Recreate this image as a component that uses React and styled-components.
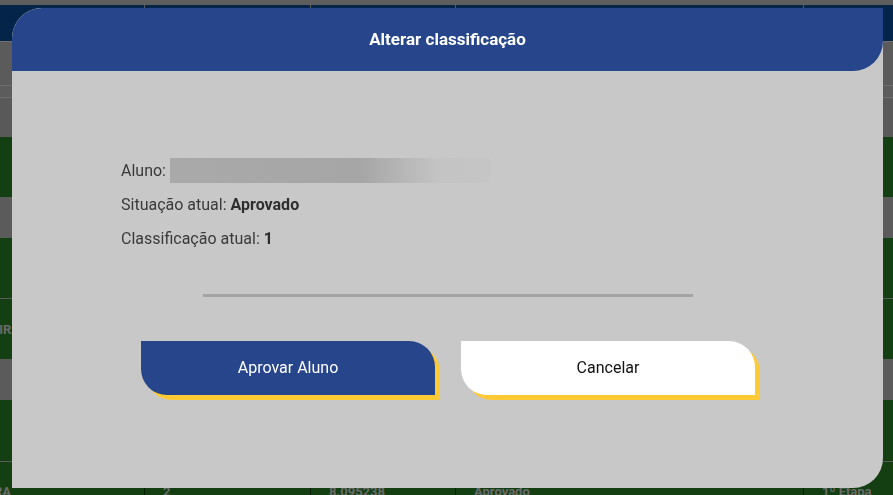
import React from 'react';
import styled, { createGlobalStyle } from 'styled-components';

const GlobalStyle = createGlobalStyle`
  html, body {
    margin: 0;
    padding: 0;
    height: 495px;
    overflow: hidden;
    background: #b6b6b6;
    font-family: Roboto, "Noto Sans", "Liberation Sans", sans-serif;
  }
`;

const Page = styled.div`
  display: flex;
  flex-direction: column;
  width: 100%;
  height: 495px;
  overflow: hidden;
`;

const TopStrip = styled.div`
  height: 5px;
  flex-shrink: 0;
  background: #bcbcbc;
`;

const Table = styled.div`
  display: flex;
  flex-direction: column;
`;

const Row = styled.div`
  display: grid;
  grid-template-columns: 144px 166px 145px 348px 1fr;
  height: ${p => p.h}px;
  flex-shrink: 0;
  background: ${p => p.bg};
  border-top: ${p => (p.line ? `1px solid ${p.line}` : 'none')};
  box-sizing: border-box;
`;

const Cell = styled.div`
  display: flex;
  align-items: center;
  justify-content: ${p => (p.end ? 'flex-end' : 'flex-start')};
  padding: ${p => (p.end ? `0 ${p.pad || 124}px 0 0` : '0 0 0 18px')};
  border-left: ${p => (p.first ? 'none' : `1px solid ${p.sep || '#5a5a5a'}`)};
  overflow: hidden;
  white-space: nowrap;
  color: #d4d4d4;
  font-size: 13px;
  font-weight: 700;
`;

const Overlay = styled.div`
  position: fixed;
  inset: 0;
  background: rgba(0, 0, 0, 0.5);
  display: flex;
  align-items: center;
  justify-content: center;
  padding-left: 2px;
`;

const Modal = styled.div`
  width: 871px;
  height: 480px;
  background: #c8c8c8;
  border-radius: 30px 0 30px 0;
  overflow: hidden;
  display: flex;
  flex-direction: column;
`;

const Header = styled.div`
  height: 63px;
  flex-shrink: 0;
  background: #26458b;
  border-radius: 30px 0 30px 0;
  display: flex;
  align-items: center;
  justify-content: center;
  color: #ffffff;
  font-size: 17px;
  font-weight: 700;
`;

const Body = styled.div`
  display: flex;
  flex-direction: column;
  padding: 83px 0 0 109px;
`;

const InfoLine = styled.div`
  display: flex;
  align-items: center;
  height: 34px;
  font-size: 16px;
  color: #3a3a3a;

  b {
    font-weight: 700;
    margin-left: 4px;
    color: #2e2e2e;
  }
`;

const BlurredName = styled.div`
  width: 320px;
  height: 25px;
  margin-left: 4px;
  background: linear-gradient(to right, #a9a9a9 0%, #a6a6a6 60%, #b8b8b8 74%, #c4c4c4 84%, #c5c5c5 100%);
  filter: blur(0.6px);
`;

const Divider = styled.div`
  width: 490px;
  height: 3px;
  background: #a4a4a4;
  margin: 38px 0 0 82px;
`;

const Actions = styled.div`
  display: flex;
  justify-content: center;
  gap: 26px;
  margin-top: 44px;
  padding-left: 1px;
`;

const ActionButton = styled.button`
  width: 294px;
  height: 54px;
  border: none;
  border-radius: 0 26px 0 26px;
  box-shadow: 5px 5px 0 #fdca36;
  background: ${p => (p.primary ? '#26458b' : '#ffffff')};
  color: ${p => (p.primary ? '#ffffff' : '#111111')};
  font-family: Roboto, "Noto Sans", "Liberation Sans", sans-serif;
  font-size: 16px;
  cursor: pointer;
`;

const rows = [
  { h: 36, bg: '#0a4894', header: true },
  { h: 44, bg: '#b6b6b6', line: '#dcdcdc' },
  { h: 12, bg: '#b8b8b8', line: '#dcdcdc' },
  { h: 40, bg: '#b2b2b2', line: '#dcdcdc' },
  { h: 60, bg: '#267e24' },
  { h: 41, bg: '#b6b6b6' },
  { h: 60, bg: '#267e24' },
  { h: 61, bg: '#267e24', line: '#b4b4b4', name: 'PEDRO HENRIQUE SOUZA MOREIRA', pad: 124 },
  { h: 41, bg: '#b6b6b6' },
  { h: 61, bg: '#267e24' },
  { h: 60, bg: '#267e24', line: '#b4b4b4', name: 'MARIA EDUARDA SANTOS FERREIRA', pad: 133, data: ['2', '8.095238', 'Aprovado', '1º Etapa'] },
];

const App = () => {
  return (
    <>
      <GlobalStyle/>
      <Page>
        <TopStrip/>
        <Table>
          {rows.map((row, index) => {
            const sep = row.header ? '#bcbcbc' : row.bg === '#267e24' ? '#0e3a0c' : '#9a9a9a';
            const data = row.data || ['', '', '', ''];
            return (
              <Row key={`row_${index}`} h={row.h} bg={row.bg} line={row.line}>
                <Cell first end pad={row.pad}>{row.name || ''}</Cell>
                {data.map((value, i) => (
                  <Cell key={`cell_${index}_${i}`} sep={sep}>{value}</Cell>
                ))}
              </Row>
            );
          })}
        </Table>
      </Page>
      <Overlay>
        <Modal>
          <Header>Alterar classificação</Header>
          <Body>
            <InfoLine>Aluno: <BlurredName/></InfoLine>
            <InfoLine>Situação atual: <b>Aprovado</b></InfoLine>
            <InfoLine>Classificação atual: <b>1</b></InfoLine>
            <Divider/>
          </Body>
          <Actions>
            <ActionButton primary>Aprovar Aluno</ActionButton>
            <ActionButton>Cancelar</ActionButton>
          </Actions>
        </Modal>
      </Overlay>
    </>
  );
};

export default App;
